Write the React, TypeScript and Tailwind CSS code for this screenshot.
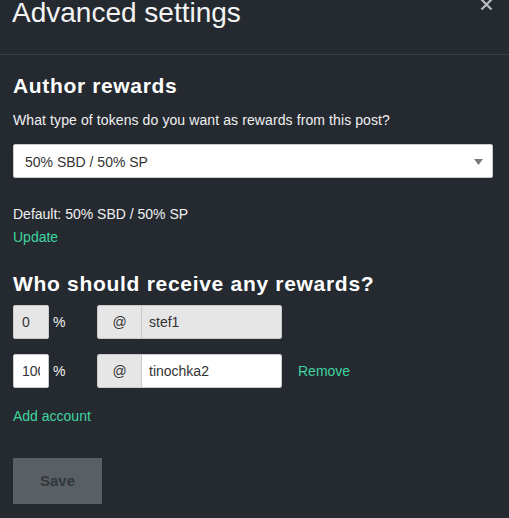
export default function App() {
  return (
    <div className="w-[509px] h-[518px] overflow-hidden bg-[#252a31] font-['Liberation_Sans',Arial,sans-serif] text-white">
      {/* Header */}
      <div className="relative flow-root h-[55px] border-b border-[#3a4048]">
        <h1 className="pl-[12px] text-[28px] leading-[25px] font-normal text-[#f4f4f4]">Advanced settings</h1>
        <svg className="absolute left-[480px] top-[-2px]" width="13" height="13" viewBox="0 0 13 13">
          <path d="M1.5 1.5 L11.5 11.5 M11.5 1.5 L1.5 11.5" stroke="#b8bcc0" strokeWidth="2.2" />
        </svg>
      </div>

      <div className="px-[13px]">
        {/* Author rewards */}
        <h2 className="mt-[19px] text-[21px] leading-[24px] font-bold tracking-[0.65px]">Author rewards</h2>
        <p className="mt-[14px] text-[14px] leading-[16px] tracking-[0.1px] text-[#f0f0f0]">
          What type of tokens do you want as rewards from this post?
        </p>
        <div className="mt-[16px] flex h-[34px] w-[480px] items-center justify-between rounded-[2px] border border-[#cacaca] bg-white pl-[11px] pr-[9px] pt-[2px] text-[14px] text-[#333]">
          <span>50% SBD / 50% SP</span>
          <svg width="9" height="6" viewBox="0 0 9 6">
            <path d="M0 0 L9 0 L4.5 6 Z" fill="#7a7a7a" />
          </svg>
        </div>

        <p className="mt-[28px] text-[14px] leading-[16px] text-[#f0f0f0]">Default: 50% SBD / 50% SP</p>
        <a className="mt-[7px] block text-[14px] leading-[16px] text-[#3fd5a0]">Update</a>

        {/* Beneficiaries */}
        <h2 className="mt-[27px] text-[21px] leading-[24px] font-bold tracking-[0.7px]">Who should receive any rewards?</h2>

        <div className="mt-[9px] flex flex-col gap-[15px]">
          <Row percent="0" name="stef1" disabled />
          <Row percent="100" name="tinochka2" />
        </div>

        <a className="mt-[20px] block text-[14px] leading-[16px] text-[#3fd5a0]">Add account</a>

        <button className="mt-[34px] h-[46px] w-[89px] bg-[#5a5f63] text-[15px] font-bold text-[#32373d]">
          Save
        </button>
      </div>
    </div>
  )
}

function Row({ percent, name, disabled }: { percent: string; name: string; disabled?: boolean }) {
  const fill = disabled ? 'bg-[#e6e6e6]' : 'bg-white'
  return (
    <div className="flex h-[34px] items-center text-[14px]">
      <div className="flex w-[84px] items-center">
        <input
          readOnly
          value={percent}
          className={`h-[34px] w-[36px] rounded-[2px] border border-[#cacaca] pl-[8px] pr-[8px] text-[14px] text-[#333] outline-none ${fill}`}
        />
        <span className="ml-[4px] text-[#f0f0f0]">%</span>
      </div>
      <div className="flex h-[34px] w-[185px] overflow-hidden rounded-[2px] border border-[#cacaca]">
        <div className="flex w-[44px] items-center justify-center border-r border-[#cacaca] bg-[#e6e6e6] text-[#333]">@</div>
        <input
          readOnly
          value={name}
          className={`min-w-0 flex-1 pl-[7px] text-[14px] text-[#333] outline-none ${fill}`}
        />
      </div>
      {!disabled && <a className="ml-[16px] text-[#3fd5a0]">Remove</a>}
    </div>
  )
}
